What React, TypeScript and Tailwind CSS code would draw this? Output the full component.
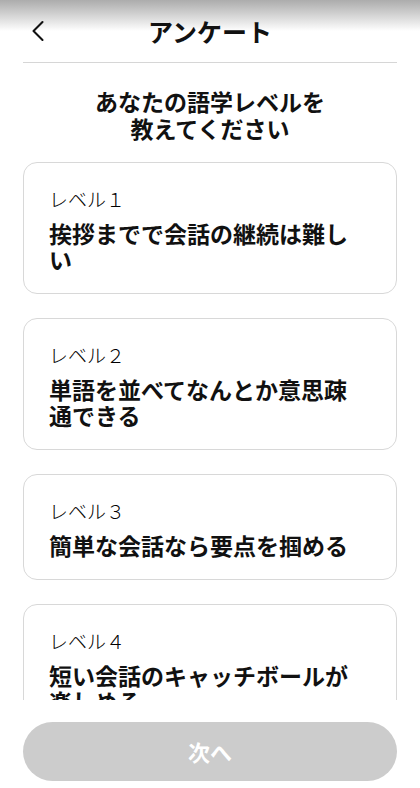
import { ChevronLeft } from "lucide-react";

const levels = [
  { label: "レベル１", text: "挨拶までで会話の継続は難しい" },
  { label: "レベル２", text: "単語を並べてなんとか意思疎通できる" },
  { label: "レベル３", text: "簡単な会話なら要点を掴める" },
  { label: "レベル４", text: "短い会話のキャッチボールが楽しめる" },
  { label: "レベル５", text: "日常会話なら問題なくこなせる" },
];

function LevelCard({ label, text }: { label: string; text: string }) {
  return (
    <button className="w-full text-left rounded-[14px] border border-[#d8d8d8] bg-white pl-[25px] pr-[40px] pt-[23px] pb-[21px]">
      <p className="text-[19px] leading-[26px] font-light text-black">{label}</p>
      <p className="mt-2 text-[23px] leading-[26px] font-bold text-[#111]">{text}</p>
    </button>
  );
}

export default function App() {
  return (
    <div
      className="h-[788px] w-[420px] flex flex-col bg-white overflow-hidden"
      style={{ fontFamily: '"Noto Sans CJK JP", "Noto Sans", sans-serif' }}
    >
      <header className="h-[62px] shrink-0 grid grid-cols-[60px_1fr_60px] items-center bg-linear-to-b from-[#acacac] to-white to-50%">
        <div className="flex items-center pl-[20px]">
          <ChevronLeft size={36} strokeWidth={1.4} className="text-[#111]" />
        </div>
        <h1 className="text-center text-[25px] leading-none font-bold text-[#111]">アンケート</h1>
        <div />
      </header>
      <div className="mx-[23px] h-px bg-[#d6d6d6] shrink-0" />

      <main className="flex-1 overflow-hidden px-[23px] pt-[25px]">
        <h2 className="text-center text-[23px] leading-[27px] font-bold text-[#111]">
          あなたの語学レベルを
          <br />
          教えてください
        </h2>
        <div className="mt-5 flex flex-col gap-6">
          {levels.map((l) => (
            <LevelCard key={l.label} label={l.label} text={l.text} />
          ))}
        </div>
      </main>

      <footer className="shrink-0 px-[23px] pt-[22px] pb-[7px]">
        <button
          disabled
          className="h-[59px] w-full rounded-full bg-[#cccccc] text-[22px] font-bold text-white"
        >
          次へ
        </button>
      </footer>
    </div>
  );
}
